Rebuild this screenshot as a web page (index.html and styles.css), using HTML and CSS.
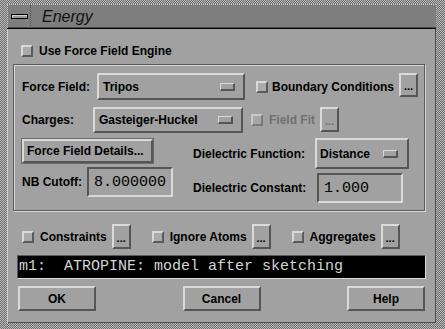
FILE: index.html
```html
<!DOCTYPE html>
<html lang="en">
<head>
  <meta charset="UTF-8">
  <title>Energy</title>
  <link rel="stylesheet" href="styles.css">
</head>
<body>
  <div class="window">
    <div class="titlebar">
      <div class="menu-btn"><span class="menu-bar"></span></div>
      <div class="title">Energy</div>
    </div>

    <div class="client">
      <div class="engine-row">
        <span class="check"></span>
        <span>Use Force Field Engine</span>
      </div>

      <div class="group">
        <div class="row row-ff">
          <span class="lbl lbl-ff">Force Field:</span>
          <div class="option opt-tripos"><span>Tripos</span><span class="indicator"></span></div>
          <span class="check check-bc"></span>
          <span class="toggle-text">Boundary Conditions</span>
          <button class="dots dots-bc">...</button>
        </div>

        <div class="row row-ch">
          <span class="lbl lbl-ch">Charges:</span>
          <div class="option opt-gh"><span>Gasteiger-Huckel</span><span class="indicator"></span></div>
          <span class="check check-ff disabled"></span>
          <span class="toggle-text disabled-text">Field Fit</span>
          <button class="dots dots-ff disabled-text">...</button>
        </div>

        <div class="lower">
          <div class="col-left">
            <button class="push details">Force Field Details...</button>
            <div class="field-row nb-row">
              <span class="lbl lbl-nb">NB Cutoff:</span>
              <div class="field">8.000000</div>
            </div>
          </div>
          <div class="col-right">
            <div class="field-row">
              <span class="lbl lbl-df">Dielectric Function:</span>
              <div class="option opt-dist"><span>Distance</span><span class="indicator"></span></div>
            </div>
            <div class="field-row dc-row">
              <span class="lbl lbl-dc">Dielectric Constant:</span>
              <div class="field">1.000</div>
            </div>
          </div>
        </div>
      </div>

      <div class="toggles">
        <span class="check"></span>
        <span class="toggle-text">Constraints</span>
        <button class="dots">...</button>
        <span class="check next"></span>
        <span class="toggle-text">Ignore Atoms</span>
        <button class="dots">...</button>
        <span class="check next"></span>
        <span class="toggle-text">Aggregates</span>
        <button class="dots">...</button>
      </div>

      <div class="output">m1:  ATROPINE: model after sketching</div>

      <div class="actions">
        <button class="push action">OK</button>
        <button class="push action">Cancel</button>
        <button class="push action">Help</button>
      </div>
    </div>
  </div>
</body>
</html>
```

FILE: styles.css
```css
* {
  box-sizing: border-box;
}

body {
  margin: 0;
  font-family: "Liberation Sans", Arial, sans-serif;
  font-size: 12px;
  font-weight: bold;
  color: #000;
}

button {
  font: inherit;
  color: inherit;
  margin: 0;
  padding: 0;
}

.window {
  width: 445px;
  height: 329px;
  padding: 4px 9px 6px 7px;
  background: repeating-conic-gradient(#6f6f6f 0 25%, #b8b8b8 0 50%) 0 0 / 2px 2px;
  display: flex;
  flex-direction: column;
}

/* title bar */
.titlebar {
  height: 25px;
  display: flex;
  align-items: stretch;
  background: #7e7e7e;
  border-top: 1px dotted #c4c4c4;
  border-bottom: 1px solid #000;
  box-shadow: inset 0 -1px #4c4c4c;
}

.menu-btn {
  width: 24px;
  display: flex;
  align-items: center;
  justify-content: center;
  border-right: 1px dotted #4a4a4a;
  border-left: 1px dotted #c4c4c4;
}

.menu-bar {
  width: 17px;
  height: 5px;
  background: #9a9a9a;
  border: 1px solid #000;
  box-shadow: inset 1px 1px #d0d0d0;
}

.title {
  margin-left: 11px;
  display: flex;
  align-items: center;
  font-size: 16px;
  font-weight: normal;
  font-style: italic;
  color: #111;
}

/* client area */
.client {
  flex: 1;
  background: #a1a1a1;
  display: flex;
  flex-direction: column;
  box-shadow: inset 1px 0 #cfcfcf, inset -1px -1px #4f4f4f;
}

.check {
  width: 12px;
  height: 12px;
  flex: none;
  background: #aaaaaa;
  border: 2px solid;
  border-color: #d8d8d8 #5a5a5a #5a5a5a #d8d8d8;
}

.check.disabled {
  border-color: #c8c8c8 #7a7a7a #7a7a7a #c8c8c8;
  background: #a6a6a6;
}

.engine-row {
  margin: 16px 0 0 14px;
  height: 12px;
  display: flex;
  align-items: center;
  gap: 6px;
}

.group {
  margin: 7px 0 0 6px;
  width: 412px;
  height: 147px;
  border: 1px solid #5c5c5c;
  box-shadow: inset 1px 1px #d6d6d6, 1px 1px #d6d6d6;
  padding: 8px 0 0 8px;
}

.row {
  display: flex;
  align-items: center;
  height: 27px;
}

.row-ch {
  margin-top: 6px;
}

.lbl {
  flex: none;
  white-space: nowrap;
}

.lbl-ff { width: 75px; }
.lbl-ch { width: 71px; }
.lbl-nb { width: 65px; }
.lbl-df { width: 122px; }
.lbl-dc { width: 124px; }

.option {
  display: flex;
  align-items: center;
  justify-content: space-between;
  padding: 0 8px 0 4px;
  background: #a1a1a1;
  border: 2px solid;
  border-color: #dadada #555 #555 #dadada;
  white-space: nowrap;
}

.indicator {
  width: 15px;
  height: 8px;
  background: #a1a1a1;
  border-style: solid;
  border-width: 1px 2px 2px 1px;
  border-color: #dadada #555 #555 #dadada;
}

.opt-tripos { width: 148px; height: 27px; }
.opt-gh { width: 150px; height: 26px; }
.opt-dist { width: 94px; height: 31px; padding-left: 3px; padding-right: 9px; }

.check-bc { margin-left: 11px; }
.check-ff { margin-left: 8px; }

.toggle-text {
  margin-left: 6px;
  white-space: nowrap;
}

.row-ff .toggle-text { margin-left: 4px; }

.disabled-text {
  color: #707070;
}

.dots {
  flex: none;
  width: 19px;
  height: 25px;
  margin-left: 5px;
  background: #a1a1a1;
  border: 2px solid;
  border-color: #dadada #555 #555 #dadada;
  display: flex;
  align-items: flex-end;
  justify-content: center;
  padding-bottom: 3px;
  font-size: 11px;
  line-height: 1;
}

.dots-bc {
  height: 24px;
  align-self: flex-start;
}

.push {
  background: #a1a1a1;
  border: 2px solid;
  border-color: #dadada #555 #555 #dadada;
  box-shadow: 1px 1px #555;
}

.lower {
  margin-top: 5px;
  display: flex;
}

.col-left {
  width: 171px;
  display: flex;
  flex-direction: column;
}

.details {
  margin-top: 1px;
  width: 131px;
  height: 24px;
  text-align: left;
  padding-left: 3px;
  box-shadow: none;
  outline: 1px solid #6a6a6a;
}

.field-row {
  display: flex;
  align-items: center;
}

.nb-row { margin-top: 4px; }
.dc-row { margin-top: 4px; }

.field {
  width: 86px;
  height: 30px;
  display: flex;
  align-items: center;
  padding-left: 5px;
  border: 2px solid;
  border-color: #555 #dadada #dadada #555;
  font-family: "Liberation Mono", "Courier New", monospace;
  font-size: 15px;
  font-weight: normal;
}

.toggles {
  margin: 13px 0 0 15px;
  height: 25px;
  display: flex;
  align-items: center;
}

.toggles .check.next {
  margin-left: 21px;
}

.toggles .toggle-text {
  margin-left: 6px;
}

.output {
  margin: 6px 0 0 10px;
  width: 409px;
  height: 24px;
  background: #000;
  border: 1px solid;
  border-color: #5a5a5a #dadada #dadada #5a5a5a;
  color: #d4d4d4;
  font-family: "Liberation Mono", "Courier New", monospace;
  font-size: 15px;
  font-weight: normal;
  line-height: 22px;
  padding-left: 1px;
  white-space: pre;
  overflow: hidden;
}

.actions {
  margin: 7px 0 0 11px;
  width: 407px;
  display: flex;
  justify-content: space-between;
}

.action {
  width: 78px;
  height: 25px;
  box-shadow: none;
}
```
